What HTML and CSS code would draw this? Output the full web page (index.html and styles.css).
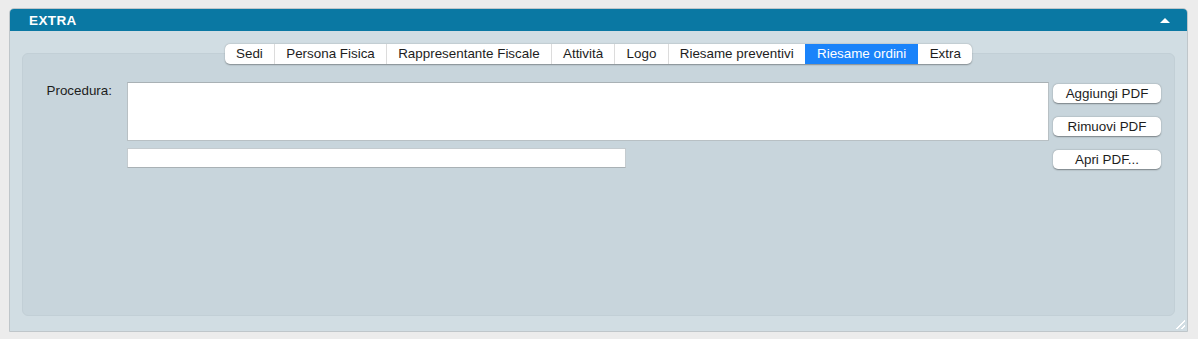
FILE: index.html
```html
<!DOCTYPE html>
<html lang="it">
<head>
  <meta charset="UTF-8" />
  <title>Extra</title>
  <link rel="stylesheet" href="styles.css">
</head>
<body>
  <div class="panel">
    <div class="panel-head">
      <span class="panel-title">EXTRA</span>
      <span class="collapse"></span>
    </div>
    <div class="panel-body">
      <div class="tabbox">
        <div class="tabs">
          <span class="tab">Sedi</span>
          <span class="tab">Persona Fisica</span>
          <span class="tab">Rappresentante Fiscale</span>
          <span class="tab">Attività</span>
          <span class="tab">Logo</span>
          <span class="tab">Riesame preventivi</span>
          <span class="tab active">Riesame ordini</span>
          <span class="tab">Extra</span>
        </div>
        <div class="form">
          <label class="lbl">Procedura:</label>
          <div class="fields">
            <div class="area"></div>
            <div class="line"></div>
          </div>
          <div class="buttons">
            <button class="btn">Aggiungi PDF</button>
            <button class="btn">Rimuovi PDF</button>
            <button class="btn">Apri PDF...</button>
          </div>
        </div>
      </div>
      <span class="grip"></span>
    </div>
  </div>
</body>
</html>
```
FILE: styles.css
```css
body {
  margin: 0;
  padding: 8px 10px 8px 9px;
  background: #ececec;
  font-family: "Liberation Sans", Arial, sans-serif;
  font-size: 13.4px;
  color: #1d1d1d;
}

.panel {
  border: 1px solid #bfc6ca;
  border-radius: 5px 5px 0 0;
  background: #d1dde3;
  height: 324px;
  box-sizing: border-box;
  display: flex;
  flex-direction: column;
}

.panel-head {
  background: #0a78a3;
  height: 22px;
  border-radius: 4px 4px 0 0;
  display: flex;
  align-items: center;
  justify-content: space-between;
  padding: 0 17px 0 19px;
}

.panel-title {
  color: #fff;
  font-weight: bold;
  font-size: 13.5px;
  letter-spacing: 0.4px;
}

.collapse {
  width: 0;
  height: 0;
  border-left: 5px solid transparent;
  border-right: 5px solid transparent;
  border-bottom: 5px solid #fff;
}

.panel-body {
  flex: 1;
  position: relative;
  padding: 22px 12px 15px 12px;
  display: flex;
}

.tabbox {
  flex: 1;
  position: relative;
  background: #c8d5dc;
  border: 1px solid #c2cfd6;
  border-radius: 6px;
}

.tabs {
  position: absolute;
  top: -10px;
  left: 0;
  right: 0;
  margin: 0 auto;
  width: max-content;
  display: flex;
  background: #fff;
  border-radius: 5px;
  box-shadow: 0 0.5px 1.5px rgba(0, 0, 0, 0.35);
  overflow: hidden;
}

.tab {
  height: 20px;
  line-height: 20px;
  padding: 0 11.2px;
  border-left: 1px solid #dcdcdc;
  white-space: nowrap;
}

.tab:first-child {
  border-left: none;
}

.tab.active {
  background: #1a83fa;
  color: #fff;
  border-left-color: #1a83fa;
}

.tab.active + .tab {
  border-left-color: #1a83fa;
}

.form {
  display: flex;
  padding: 28px 0 0 0;
}

.lbl {
  width: 89px;
  text-align: right;
  padding-top: 1px;
}

.fields {
  margin-left: 15px;
  width: 922px;
  display: flex;
  flex-direction: column;
  gap: 7px;
}

.area {
  height: 57px;
  background: #fff;
  border: 1px solid #b8c0c4;
  border-top-color: #a9b1b5;
}

.line {
  width: 497px;
  height: 18px;
  background: #fff;
  border: 1px solid #c4cbcf;
  border-bottom-color: #a9b1b5;
}

.buttons {
  margin-left: 4px;
  padding-top: 2px;
  display: flex;
  flex-direction: column;
  gap: 14px;
}

.btn {
  width: 108px;
  height: 19px;
  padding: 0;
  background: #fff;
  border: none;
  border-radius: 5px;
  box-shadow: 0 0.5px 1.5px rgba(0, 0, 0, 0.4);
  font-family: inherit;
  font-size: 13.4px;
  color: #1d1d1d;
}

.grip {
  position: absolute;
  right: 2px;
  bottom: 2px;
  width: 11px;
  height: 11px;
  background: repeating-linear-gradient(135deg, transparent 0 2px, #fff 2px 3.5px);
  clip-path: polygon(100% 0, 100% 100%, 0 100%);
}
```
